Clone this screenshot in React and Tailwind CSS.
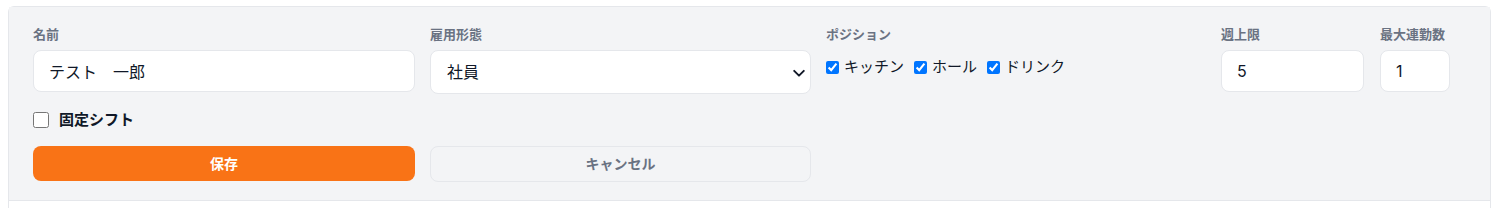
import React from "react";

const font = { fontFamily: 'Inter, "Noto Sans CJK JP", sans-serif' };

function Label({ children }) {
  return (
    <div className="text-[13px] leading-5 font-semibold text-gray-500 mb-1.5">{children}</div>
  );
}

export default function App() {
  return (
    <div className="bg-white pl-2 pt-1.5 pr-[6px] h-[208px]" style={font}>
      <div className="border-x border-t border-gray-200 rounded-t-md h-[210px] bg-white">
        <div className="bg-gray-100 border-b border-gray-200 pt-[17px] pb-[18px] pl-6">
          <div className="flex items-start">
            <div className="w-[382px]">
              <Label>名前</Label>
              <input
                readOnly
                value="テスト　一郎"
                className="w-full h-[42px] bg-white border border-gray-200 rounded-lg px-[15px] text-base text-gray-900 outline-none"
              />
            </div>
            <div className="w-[381px] ml-[15px]">
              <Label>雇用形態</Label>
              <div className="relative">
                <select className="appearance-none w-full h-[44px] bg-white border border-gray-200 rounded-lg px-4 text-base text-gray-900 outline-none">
                  <option>社員</option>
                </select>
                <svg className="absolute right-[5px] top-[16px]" width="14" height="14" viewBox="0 0 16 16" fill="none">
                  <path d="M2.5 5.5L8 11l5.5-5.5" stroke="#111827" strokeWidth="2.2" strokeLinecap="round" strokeLinejoin="round" />
                </svg>
              </div>
            </div>
            <div className="w-[380px] ml-[15px]">
              <Label>ポジション</Label>
              <div className="flex items-center text-[15px] leading-5 text-gray-900 gap-[10px] mt-[13px]">
                <label className="flex items-center gap-[5px]">
                  <input type="checkbox" defaultChecked className="w-[13px] h-[13px] m-0" />
                  キッチン
                </label>
                <label className="flex items-center gap-[5px]">
                  <input type="checkbox" defaultChecked className="w-[13px] h-[13px] m-0" />
                  ホール
                </label>
                <label className="flex items-center gap-[5px]">
                  <input type="checkbox" defaultChecked className="w-[13px] h-[13px] m-0" />
                  ドリンク
                </label>
              </div>
            </div>
            <div className="w-[143px] ml-[15px]">
              <Label>週上限</Label>
              <input
                readOnly
                value="5"
                className="w-full h-[42px] bg-white border border-gray-200 rounded-lg px-[15px] text-base text-gray-900 outline-none"
              />
            </div>
            <div className="w-[70px] ml-[16px]">
              <Label>最大連勤数</Label>
              <input
                readOnly
                value="1"
                className="w-full h-[42px] bg-white border border-gray-200 rounded-lg px-[15px] text-base text-gray-900 outline-none"
              />
            </div>
          </div>
          <label className="flex items-center gap-[10px] mt-4 h-5 text-[15px] font-bold text-gray-900">
            <input type="checkbox" className="w-4 h-4 m-0" />
            固定シフト
          </label>
          <div className="flex mt-4">
            <button className="w-[382px] h-[35px] rounded-lg bg-[#f97316] text-white text-sm font-bold">
              保存
            </button>
            <button className="w-[381px] ml-[15px] h-[36px] rounded-lg bg-gray-100 border border-gray-200 text-gray-500 text-sm font-bold">
              キャンセル
            </button>
          </div>
        </div>
      </div>
    </div>
  );
}
